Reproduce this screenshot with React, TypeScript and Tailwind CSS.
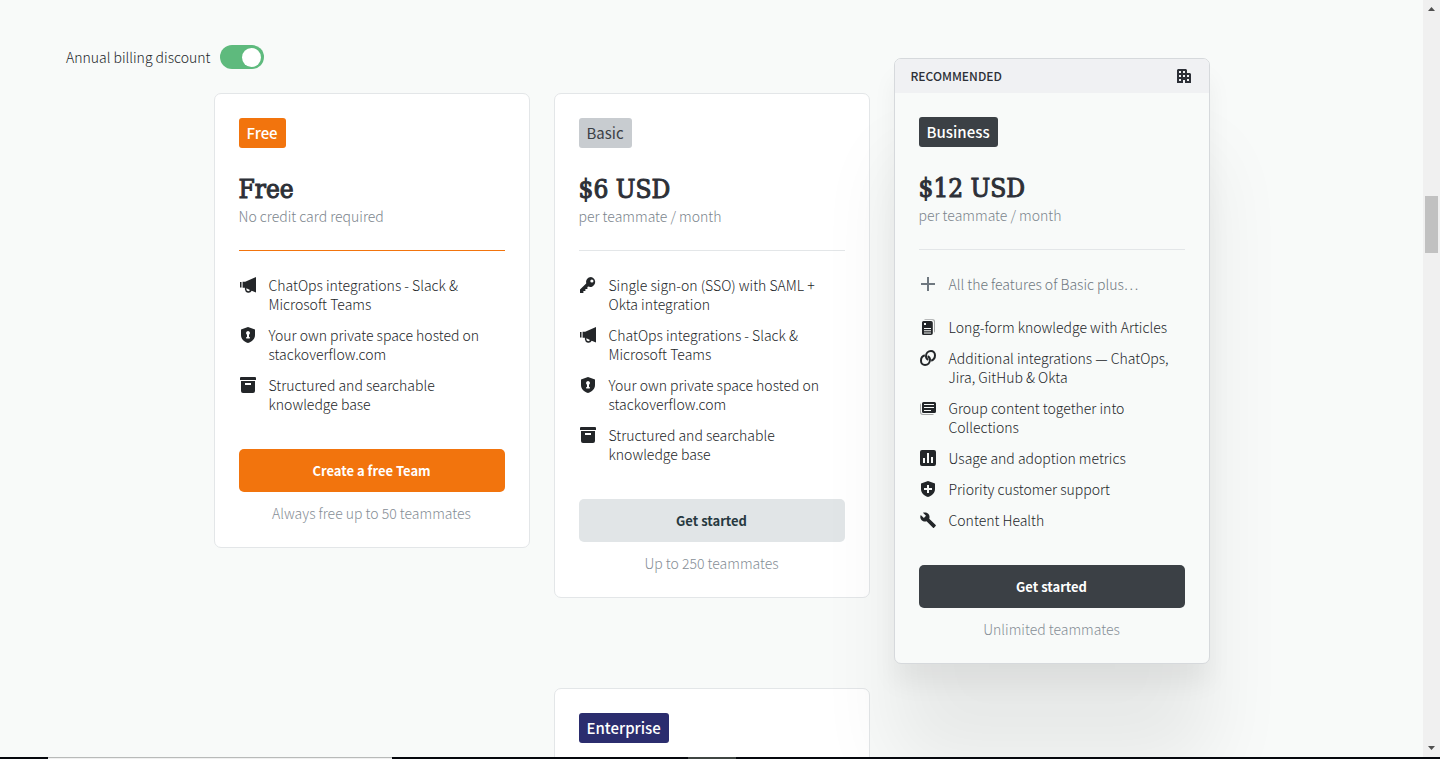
import { useState, type ReactNode } from "react";

const icons = {
  key: (
    <path
      fillRule="evenodd"
      d="M12 1a5 5 0 0 0-4.800 6.400L1 13.600V17h3.400v-2h2v-2h2v-2l1-.4A5 5 0 1 0 12 1Zm.9 5.600a1.600 1.600 0 1 1 0-3.200 1.600 1.600 0 0 1 0 3.200Z"
    />
  ),
  megaphone: (
    <path
      fillRule="evenodd"
      d="M1 6h1.500v5.500H1V6Zm2.600-.2h2.600L17 1v15.500l-4.300-1.800a3.600 3.600 0 0 1-6.800-1.200v-1.700H3.600V5.800Zm3.800 6.500v1a1.900 1.900 0 0 0 3.600.8l-3.600-1.800Z"
    />
  ),
  shieldLock: (
    <path
      fillRule="evenodd"
      d="M9 1 2 3.500V9c0 4 3 6.800 7 8 4-1.200 7-4 7-8V3.500L9 1Zm0 4a2 2 0 0 1 1 3.700V11h.8v1.500H7.200V11H8V8.700A2 2 0 0 1 9 5Z"
    />
  ),
  archive: (
    <path
      fillRule="evenodd"
      d="M2 1h14a1 1 0 0 1 1 1v2H1V2a1 1 0 0 1 1-1Zm0 4h14v10a2 2 0 0 1-2 2H4a2 2 0 0 1-2-2V5Zm4 2v2h6V7H6Z"
    />
  ),
  plus: <path d="M8 2h2v6h6v2h-6v6H8v-6H2V8h6V2Z" />,
  article: (
    <>
      <path opacity=".4" d="M5 2a2 2 0 0 1 1.500-.8H14a2 2 0 0 1 2 2V13a2 2 0 0 1-1 1.700V4a2 2 0 0 0-2-2H5Z" />
      <path
        fillRule="evenodd"
        d="M4.500 3H12a1.800 1.800 0 0 1 1.800 1.800v10.400A1.800 1.800 0 0 1 12 17H4.500a1.500 1.500 0 0 1-1.500-1.500v-11A1.500 1.500 0 0 1 4.500 3ZM5 5v2h2V5H5Zm0 5v1h7v-1H5Zm0 2.200v1h7v-1H5Zm0 2.200v1h7v-1H5Z"
      />
    </>
  ),
  link: (
    <g fill="none" stroke="currentColor" strokeWidth="2">
      <path d="M5.800 6.300C3.500 7 2 9.200 2 11.700 2 14.300 3.800 16 6 16c2.800 0 5-2.300 5-5.200 0-1.700-.9-3-2.400-3.600" />
      <path d="M12.200 11.700C14.500 11 16 8.800 16 6.300 16 3.700 14.200 2 12 2 9.200 2 7 4.300 7 7.200c0 1.700.9 3 2.400 3.600" />
    </g>
  ),
  collection: (
    <>
      <path opacity=".4" d="M1 6a2 2 0 0 1 1-1.700V13a2 2 0 0 0 2 2h11a2 2 0 0 1-1.700 1H4a3 3 0 0 1-3-3V6Z" />
      <path
        fillRule="evenodd"
        d="M4.500 3h11A1.500 1.500 0 0 1 17 4.500v8a1.500 1.500 0 0 1-1.500 1.500h-11A1.500 1.500 0 0 1 3 12.500v-8A1.500 1.500 0 0 1 4.500 3ZM5 5v1h10V5H5Zm0 3v1h10V8H5Zm0 3v1h7v-1H5Z"
      />
    </>
  ),
  chart: (
    <path
      fillRule="evenodd"
      d="M3 1h12a2 2 0 0 1 2 2v12a2 2 0 0 1-2 2H3a2 2 0 0 1-2-2V3a2 2 0 0 1 2-2Zm1 8v5h2V9H4Zm4-5v10h2V4H8Zm4 4v6h2V8h-2Z"
    />
  ),
  shieldPlus: (
    <path
      fillRule="evenodd"
      d="M9 1 2 3.500V9c0 4 3 6.800 7 8 4-1.200 7-4 7-8V3.500L9 1ZM8 5v3H5v2h3v3h2v-3h3V8h-3V5H8Z"
    />
  ),
  wrench: (
    <path
      transform="translate(.6 .6) scale(.71)"
      d="m22.700 19-9.100-9.100c.9-2.300.4-5-1.500-6.900-2-2-5-2.400-7.400-1.300L9 6 6 9 1.600 4.700C.4 7.100.9 10.100 2.900 12.100c1.900 1.900 4.600 2.400 6.900 1.500l9.100 9.100c.4.4 1 .4 1.400 0l2.300-2.300c.5-.4.5-1.100.1-1.400z"
    />
  ),
  building: (
    <path
      fillRule="evenodd"
      d="M3 2h8l1 1v3h3l1 1v9h-6v-3H8v3H2V3l1-1Zm1 2v2h2V4H4Zm4 0v2h2V4H8ZM4 8v2h2V8H4Zm4 0v2h2V8H8Zm4 0v2h2V8h-2Zm-8 4v2h2v-2H4Zm8 0v2h2v-2h-2Z"
    />
  ),
};

type IconName = keyof typeof icons;

function Icon({ name }: { name: IconName }) {
  return (
    <svg aria-hidden="true" viewBox="0 0 18 18" fill="currentColor" className="size-[18px] shrink-0">
      {icons[name]}
    </svg>
  );
}

type Feature = [IconName, string];

const chatOps: Feature = ["megaphone", "ChatOps integrations - Slack & Microsoft Teams"];
const privateSpace: Feature = ["shieldLock", "Your own private space hosted on stackoverflow.com"];
const knowledgeBase: Feature = ["archive", "Structured and searchable knowledge base"];

const businessFeatures: Feature[] = [
  ["article", "Long-form knowledge with Articles"],
  ["link", "Additional integrations — ChatOps, Jira, GitHub & Okta"],
  ["collection", "Group content together into Collections"],
  ["chart", "Usage and adoption metrics"],
  ["shieldPlus", "Priority customer support"],
  ["wrench", "Content Health"],
];

function Badge({ className, children }: { className: string; children: ReactNode }) {
  return (
    <h2 className={`w-fit rounded-[3px] px-2 text-[15px] leading-[30px] ${className}`}>{children}</h2>
  );
}

type PlanProps = {
  name: string;
  badgeClass: string;
  price: string;
  priceNote: string;
  ruleClass: string;
  intro?: string;
  features: Feature[];
  action: string;
  actionClass: string;
  limit: string;
};

function Plan(p: PlanProps) {
  return (
    <div className="p-6">
      <Badge className={p.badgeClass}>{p.name}</Badge>
      <p className="mt-[23px] font-['DejaVu_Serif_Condensed','DejaVu_Serif',serif] text-[26px] leading-9 text-[#2d3037] [-webkit-text-stroke:1px_#2d3037]">
        {p.price}
      </p>
      <p className="text-[#7c858d]">{p.priceNote}</p>
      <hr className={`mt-6 mb-[25px] ${p.ruleClass}`} />
      {p.intro && (
        <p className="mb-6 flex gap-3 text-[#6f7880]">
          <Icon name="plus" />
          {p.intro}
        </p>
      )}
      <ul className="flex flex-col gap-3">
        {p.features.map(([icon, text]) => (
          <li key={text} className="flex gap-3">
            <Icon name={icon} />
            <span>{text}</span>
          </li>
        ))}
      </ul>
      <button type="button" className={`mt-[35px] h-[43px] w-full rounded-[5px] text-[13px] font-bold ${p.actionClass}`}>
        {p.action}
      </button>
      <p className="mt-3 text-center text-[#868e96]">{p.limit}</p>
    </div>
  );
}

export default function App() {
  const [annual, setAnnual] = useState(true);
  return (
    <div className="flex h-screen flex-col overflow-hidden bg-[#f8faf9] font-['Noto_Sans_CJK_JP',sans-serif] text-sm leading-[19px] font-light text-[#232629]">
      <div className="flex min-h-0 flex-1">
        <main className="min-w-0 flex-1 overflow-hidden pt-[45px]">
          <label className="ml-[66px] flex w-fit cursor-pointer items-center gap-[10px]">
            Annual billing discount
            <input
              type="checkbox"
              role="switch"
              checked={annual}
              onChange={(e) => setAnnual(e.target.checked)}
              className="flex h-6 w-11 cursor-pointer appearance-none items-center rounded-full bg-[#c8ccd0] px-[3px] before:size-[19px] before:rounded-full before:bg-white checked:justify-end checked:bg-[#5eba7d]"
            />
          </label>
          <div className="mx-auto mt-6 grid max-w-[996px] grid-cols-3 items-start gap-6">
            <section className="rounded-[7px] border border-[#e3e6e8] bg-white">
              <Plan
                name="Free"
                badgeClass="bg-[#f2740d] font-medium text-white"
                price="Free"
                priceNote="No credit card required"
                ruleClass="border-[#f2740d]"
                features={[chatOps, privateSpace, knowledgeBase]}
                action="Create a free Team"
                actionClass="bg-[#f2740d] text-white"
                limit="Always free up to 50 teammates"
              />
            </section>
            <section className="rounded-[7px] border border-[#e3e6e8] bg-white">
              <Plan
                name="Basic"
                badgeClass="bg-[#c8ccd0] font-normal text-[#3b4045]"
                price="$6 USD"
                priceNote="per teammate / month"
                ruleClass="border-[#e3e6e8]"
                features={[
                  ["key", "Single sign-on (SSO) with SAML + Okta integration"],
                  chatOps,
                  privateSpace,
                  knowledgeBase,
                ]}
                action="Get started"
                actionClass="bg-[#e1e5e7] text-[#273940]"
                limit="Up to 250 teammates"
              />
            </section>
            <section className="relative z-10 -mt-[35px] rounded-[7px] border border-[#d6d9dc] bg-[#f8faf9] shadow-[0_100px_80px_rgba(0,0,0,0.07),0_20px_25px_rgba(0,0,0,0.05)]">
              <header className="flex h-[34px] items-center justify-between rounded-t-[6px] bg-[#f0f1f3] px-4 text-xs font-medium text-[#2d3037]">
                RECOMMENDED
                <Icon name="building" />
              </header>
              <Plan
                name="Business"
                badgeClass="bg-[#3b4045] font-medium text-white"
                price="$12 USD"
                priceNote="per teammate / month"
                ruleClass="border-[#e3e6e8]"
                intro="All the features of Basic plus…"
                features={businessFeatures}
                action="Get started"
                actionClass="bg-[#3b4045] text-white"
                limit="Unlimited teammates"
              />
            </section>
            <section className="col-start-2 rounded-[7px] border border-[#e3e6e8] bg-white p-6 pb-12">
              <Badge className="bg-[#2b2d6e] font-medium text-white">Enterprise</Badge>
            </section>
          </div>
        </main>
        <div aria-hidden="true" className="flex w-[17px] shrink-0 flex-col items-center bg-[#f0f0f0] text-[#505050]">
          <svg viewBox="0 0 17 17" fill="currentColor" className="size-[17px]">
            <path d="M5 11h7L8.500 7z" />
          </svg>
          <div className="flex w-full flex-1 flex-col items-center">
            <div className="basis-[179px]" />
            <div className="h-[57px] w-[13px] bg-[#c1c1c1]" />
          </div>
          <svg viewBox="0 0 17 17" fill="currentColor" className="size-[17px]">
            <path d="M5 6h7l-3.500 4z" />
          </svg>
        </div>
      </div>
      <div aria-hidden="true" className="flex h-[2px] shrink-0 bg-[#05080d]">
        <div className="ml-12 w-[344px] border-t border-[#b8bab9] bg-[#f0f0f0]" />
        <div className="ml-[296px] w-12 bg-[#3f4542]" />
      </div>
    </div>
  );
}
